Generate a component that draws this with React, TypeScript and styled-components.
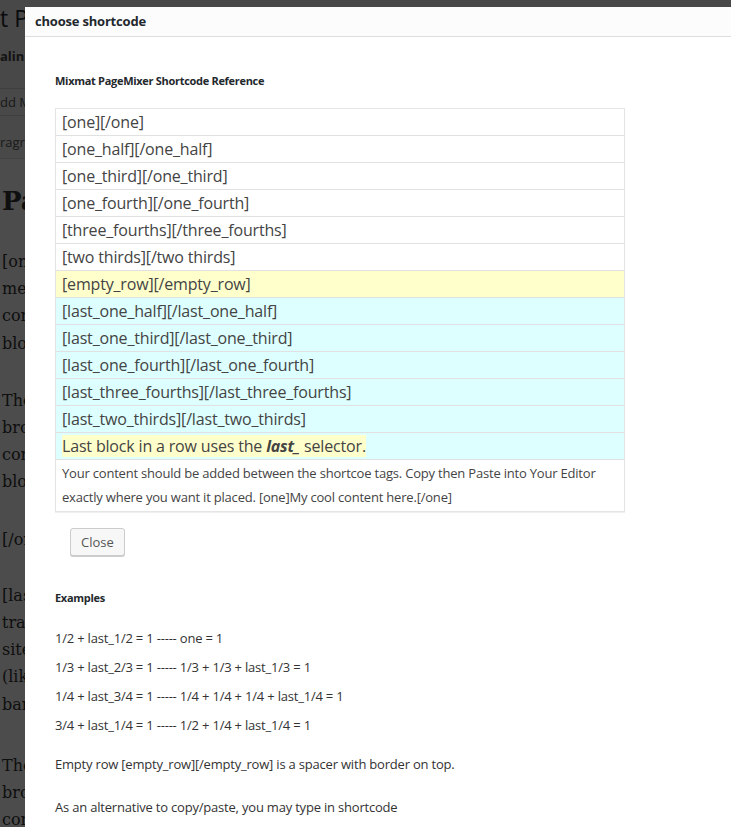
import React from "react";
import styled, { createGlobalStyle } from "styled-components";

const Global = createGlobalStyle`
  html, body { margin: 0; padding: 0; background: #ffffff; }
  body { font-family: "Open Sans", "Noto Sans", sans-serif; overflow: hidden; }
  * { box-sizing: border-box; }
`;

/* ---------- background editor page (dimmed) ---------- */
const Page = styled.div`
  width: 731px;
  height: 827px;
  background: #f1f1f1;
  overflow: hidden;
  display: flex;
  flex-direction: column;
  & > * { flex-shrink: 0; }
`;

const PageTitle = styled.div`
  font-family: "Open Sans", sans-serif;
  font-size: 23px;
  line-height: 30px;
  color: #23282d;
  padding-top: 3px;
  white-space: nowrap;
`;

const Permalink = styled.div`
  font-family: "Open Sans", sans-serif;
  font-size: 13px;
  line-height: 18px;
  font-weight: 700;
  color: #444;
  margin-top: 14px;
  white-space: nowrap;
`;

const ToolRow = styled.div<{ $h: number; $top: number; $pb: number }>`
  height: ${(p) => p.$h}px;
  margin-top: ${(p) => p.$top}px;
  padding-bottom: ${(p) => p.$pb}px;
  border-top: 1px solid #d4d4d4;
  background: #f5f5f5;
  display: flex;
  align-items: flex-end;
  font-size: 13px;
  line-height: 18px;
  color: #555;
  white-space: nowrap;
`;

const Editor = styled.div`
  flex: 1 0 auto;
  background: #ffffff;
  border-top: 1px solid #dcdcdc;
  padding: 26px 0 0 2px;
  font-family: "DejaVu Serif", "Liberation Serif", serif;
  color: #333;
`;

const EditorHeading = styled.div`
  font-size: 26px;
  font-weight: 700;
  line-height: 32px;
  margin-bottom: 31px;
  white-space: nowrap;
`;

const EditorPara = styled.p<{ $gap?: number }>`
  font-size: 16px;
  line-height: 27.2px;
  margin: 0 0 ${(p) => p.$gap ?? 29}px;
  white-space: nowrap;
`;

const Overlay = styled.div`
  position: fixed;
  inset: 0;
  background: rgba(0, 0, 0, 0.7);
`;

/* ---------- modal ---------- */
const Modal = styled.div`
  position: fixed;
  top: 7px;
  left: 25px;
  right: 0;
  bottom: 0;
  background: #ffffff;
  display: flex;
  flex-direction: column;
  font-family: "Open Sans", "Noto Sans", sans-serif;
  color: #444;
`;

const TitleBar = styled.div`
  height: 30px;
  flex-shrink: 0;
  background: #fcfcfc;
  border-bottom: 1px solid #dddddd;
  display: flex;
  align-items: center;
  padding: 0 10px 1px;
  font-size: 13px;
  font-weight: 700;
  letter-spacing: -0.2px;
  color: #23282d;
`;

const Body = styled.div`
  padding: 36px 30px 0;
  display: flex;
  flex-direction: column;
  align-items: flex-start;
`;

const SmallHeading = styled.h4<{ $top?: number }>`
  margin: ${(p) => p.$top ?? 0}px 0 0;
  font-size: 11px;
  line-height: 16px;
  font-weight: 700;
  letter-spacing: -0.3px;
  color: #23282d;
`;

const Table = styled.div`
  margin-top: 19px;
  width: 570px;
  border: 1px solid #e5e5e5;
  box-shadow: 0 1px 1px rgba(0, 0, 0, 0.06);
  display: flex;
  flex-direction: column;
`;

const Row = styled.div<{ $tone?: "yellow" | "cyan" }>`
  height: 27px;
  padding: 0 6px;
  border-bottom: 1px solid #e1e1e1;
  background: ${(p) =>
    p.$tone === "yellow" ? "#ffffcc" : p.$tone === "cyan" ? "#ddffff" : "#ffffff"};
  font-size: 16px;
  line-height: 26px;
  letter-spacing: -0.17px;
  color: #444;
  white-space: nowrap;
`;

const Mark = styled.span`
  background: #ffffcc;
`;

const Note = styled.div`
  padding: 1px 6px 2px;
  font-size: 13px;
  line-height: 24px;
  letter-spacing: -0.2px;
  color: #444;
`;

const CloseButton = styled.button`
  margin: 16px 0 0 15px;
  height: 28px;
  padding: 0 10px 1px;
  font-family: inherit;
  font-size: 13px;
  color: #555;
  background: #f7f7f7;
  border: 1px solid #cccccc;
  border-radius: 3px;
  box-shadow: 0 1px 0 #cccccc;
  cursor: pointer;
`;

const Examples = styled.div`
  margin-top: 18px;
  display: flex;
  flex-direction: column;
`;

const ExampleLine = styled.div`
  font-size: 13px;
  line-height: 29px;
  letter-spacing: -0.2px;
  color: #333;
  white-space: nowrap;
`;

const Para = styled.p<{ $top: number }>`
  margin: ${(p) => p.$top}px 0 0;
  font-size: 13px;
  line-height: 29px;
  letter-spacing: -0.2px;
  color: #333;
  white-space: nowrap;
`;

const rows: { text: string; tone?: "yellow" | "cyan" }[] = [
  { text: "[one][/one]" },
  { text: "[one_half][/one_half]" },
  { text: "[one_third][/one_third]" },
  { text: "[one_fourth][/one_fourth]" },
  { text: "[three_fourths][/three_fourths]" },
  { text: "[two thirds][/two thirds]" },
  { text: "[empty_row][/empty_row]", tone: "yellow" },
  { text: "[last_one_half][/last_one_half]", tone: "cyan" },
  { text: "[last_one_third][/last_one_third]", tone: "cyan" },
  { text: "[last_one_fourth][/last_one_fourth]", tone: "cyan" },
  { text: "[last_three_fourths][/last_three_fourths]", tone: "cyan" },
  { text: "[last_two_thirds][/last_two_thirds]", tone: "cyan" },
];

const examples = [
  "1/2 + last_1/2 = 1 ----- one = 1",
  "1/3 + last_2/3 = 1 ----- 1/3 + 1/3 + last_1/3 = 1",
  "1/4 + last_3/4 = 1 ----- 1/4 + 1/4 + 1/4 + last_1/4 = 1",
  "3/4 + last_1/4 = 1 ----- 1/2 + 1/4 + last_1/4 = 1",
];

export default function App() {
  return (
    <>
      <Global />
      <Page>
        <PageTitle>t Page</PageTitle>
        <Permalink>alink:</Permalink>
        <ToolRow $h={27} $top={23} $pb={4}>
          dd Media
        </ToolRow>
        <ToolRow $h={43} $top={0} $pb={7}>
          ragraph
        </ToolRow>
        <Editor>
          <EditorHeading>Page</EditorHeading>
          <EditorPara $gap={30}>
            [one]
            <br />
            messages
            <br />
            content
            <br />
            block
          </EditorPara>
          <EditorPara $gap={30}>
            The
            <br />
            browser
            <br />
            content
            <br />
            block
          </EditorPara>
          <EditorPara>[/one]</EditorPara>
          <EditorPara $gap={34}>
            [last
            <br />
            track
            <br />
            site
            <br />
            (like
            <br />
            bar
          </EditorPara>
          <EditorPara>
            The
            <br />
            browser
            <br />
            content
          </EditorPara>
        </Editor>
      </Page>
      <Overlay />
      <Modal>
        <TitleBar>choose shortcode</TitleBar>
        <Body>
          <SmallHeading>Mixmat PageMixer Shortcode Reference</SmallHeading>
          <Table>
            {rows.map((r) => (
              <Row key={r.text} $tone={r.tone}>
                {r.text}
              </Row>
            ))}
            <Row $tone="cyan">
              <Mark>
                Last block in a row uses the{" "}
                <b>
                  <i>last_</i>
                </b>{" "}
                selector.
              </Mark>
            </Row>
            <Note>
              Your content should be added between the shortcoe tags. Copy then Paste into Your
              Editor exactly where you want it placed. [one]My cool content here.[/one]
            </Note>
          </Table>
          <CloseButton type="button">Close</CloseButton>
          <SmallHeading $top={34}>Examples</SmallHeading>
          <Examples>
            {examples.map((e) => (
              <ExampleLine key={e}>{e}</ExampleLine>
            ))}
          </Examples>
          <Para $top={10}>Empty row [empty_row][/empty_row] is a spacer with border on top.</Para>
          <Para $top={14}>As an alternative to copy/paste, you may type in shortcode</Para>
        </Body>
      </Modal>
    </>
  );
}
